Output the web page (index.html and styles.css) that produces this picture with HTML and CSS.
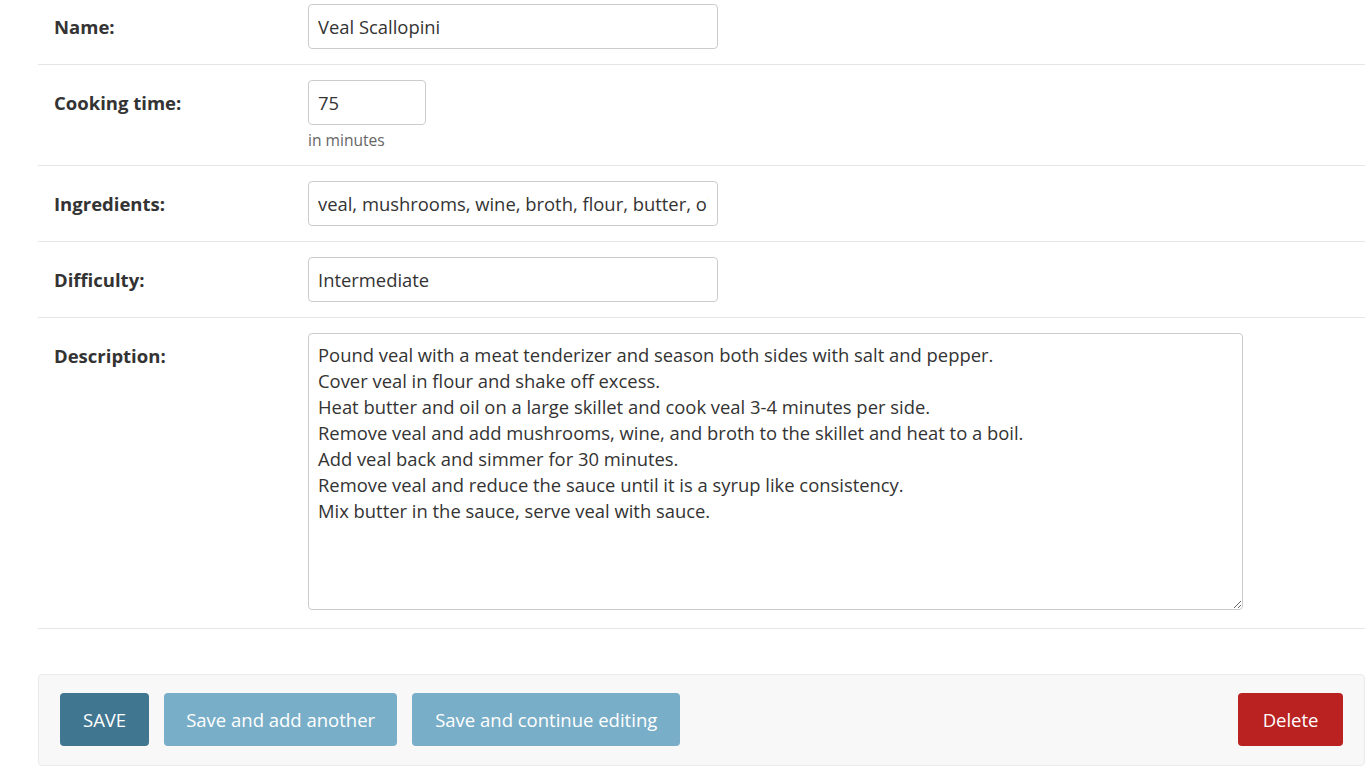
FILE: index.html
```html
<!DOCTYPE html>
<html>
<head>
<meta charset="utf-8">
<link rel="stylesheet" href="styles.css">
</head>
<body>
<div class="content">
  <form class="change-form">
    <fieldset class="module">
      <div class="form-row">
        <label class="field-label">Name:</label>
        <div class="field-body"><input class="vText" type="text" value="Veal Scallopini"></div>
      </div>
      <div class="form-row">
        <label class="field-label">Cooking time:</label>
        <div class="field-body">
          <input class="vInt" type="text" value="75">
          <div class="help">in minutes</div>
        </div>
      </div>
      <div class="form-row">
        <label class="field-label">Ingredients:</label>
        <div class="field-body"><input class="vText" type="text" value="veal, mushrooms, wine, broth, flour, butter, oil"></div>
      </div>
      <div class="form-row">
        <label class="field-label">Difficulty:</label>
        <div class="field-body"><input class="vText" type="text" value="Intermediate"></div>
      </div>
      <div class="form-row form-row-last">
        <label class="field-label">Description:</label>
        <div class="field-body"><textarea class="vLarge">Pound veal with a meat tenderizer and season both sides with salt and pepper.
Cover veal in flour and shake off excess.
Heat butter and oil on a large skillet and cook veal 3-4 minutes per side.
Remove veal and add mushrooms, wine, and broth to the skillet and heat to a boil.
Add veal back and simmer for 30 minutes.
Remove veal and reduce the sauce until it is a syrup like consistency.
Mix butter in the sauce, serve veal with sauce.</textarea></div>
      </div>
    </fieldset>
    <div class="submit-row">
      <button type="button" class="btn btn-default">SAVE</button>
      <button type="button" class="btn btn-light">Save and add another</button>
      <button type="button" class="btn btn-light btn-wide">Save and continue editing</button>
      <span class="spacer"></span>
      <button type="button" class="btn btn-delete">Delete</button>
    </div>
  </form>
</div>
</body>
</html>
```
FILE: styles.css
```css
html, body {
  margin: 0;
  padding: 0;
  background: #fff;
}
body {
  font-family: "Open Sans", "Noto Sans", sans-serif;
  color: #333;
  overflow: hidden;
}
.content {
  padding: 0 4px 0 38px;
  margin-top: -11px;
}
.module {
  border: 0;
  margin: 0;
  padding: 0;
}
.form-row {
  display: flex;
  align-items: flex-start;
  padding: 15px 0 15px 16px;
  border-bottom: 1px solid #e6e6e6;
}
.form-row-last {
  padding-bottom: 18px;
}
.field-label {
  width: 254px;
  flex: none;
  font-weight: 700;
  font-size: 18.5px;
  line-height: 22px;
  padding-top: 12px;
  color: #333;
}
.field-body {
  display: flex;
  flex-direction: column;
}
input, textarea {
  font-family: inherit;
  font-size: 18.4px;
  color: #333;
  border: 1px solid #ccc;
  border-radius: 4px;
  box-sizing: border-box;
  background: #fff;
  outline: none;
}
.vText {
  width: 410px;
  height: 45px;
  padding: 0 9px;
}
.vInt {
  width: 118px;
  height: 45px;
  padding: 0 9px;
}
.help {
  font-size: 15.6px;
  color: #666;
  margin-top: 5px;
  line-height: 20px;
}
.vLarge {
  width: 935px;
  height: 277px;
  padding: 8px 9px;
  line-height: 26px;
  resize: both;
  display: block;
}
.submit-row {
  display: flex;
  align-items: center;
  gap: 15px;
  margin-top: 45px;
  padding: 18px 21px 19px 21px;
  background: #f8f8f8;
  border: 1px solid #eaeaea;
  border-radius: 4px;
}
.spacer {
  flex: 1;
}
.btn {
  font-family: inherit;
  font-size: 18.5px;
  color: #fff;
  border: 0;
  border-radius: 4px;
  height: 53px;
  padding: 0 22px;
  cursor: pointer;
}
.btn-default {
  background: #417690;
  padding: 0 23px;
}
.btn-light {
  background: #79aec8;
}
.btn-wide {
  padding: 0 23px;
}
.btn-delete {
  background: #ba2121;
  padding: 0 24.5px;
}
```
